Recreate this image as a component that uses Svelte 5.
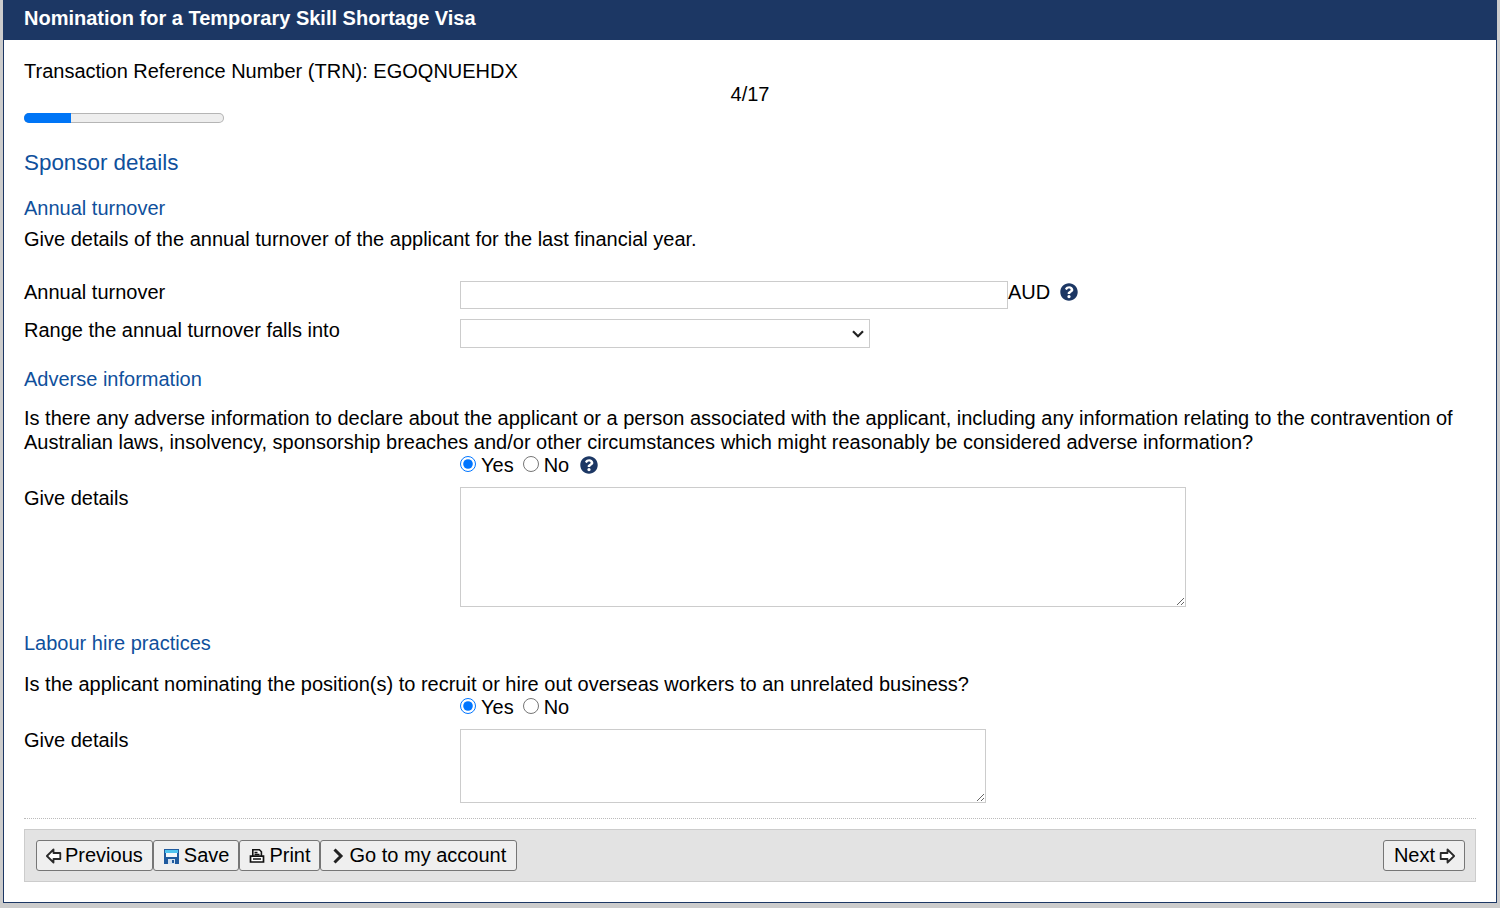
<script>
  const pct = 23.5;
</script>

{#snippet help()}
  <svg class="help" viewBox="0 0 512 512" width="18" height="18" aria-hidden="true">
    <path fill="#1c3764" d="M504 256c0 137-111 248-248 248S8 393 8 256 119 8 256 8s248 111 248 248zM262.700 90c-54.500 0-89.300 23-116.600 63.800-3.500 5.300-2.300 12.400 2.700 16.300l34.700 26.300c5.200 3.900 12.600 3 16.700-2.100 17.900-22.700 30.100-35.800 57.300-35.800 20.400 0 45.700 13.100 45.700 33 0 15-12.400 22.700-32.600 34-23.600 13.200-54.800 29.700-54.800 70.900V300c0 6.600 5.400 12 12 12h56c6.600 0 12-5.400 12-12v-1.300c0-28.600 83.400-29.800 83.400-107.100C379.200 133.300 318.700 90 262.700 90zM256 339c-25.400 0-46 20.600-46 46s20.600 46 46 46 46-20.600 46-46-20.600-46-46-46z"/>
  </svg>
{/snippet}

<div class="page">
  <div class="frame">
    <header class="title">Nomination for a Temporary Skill Shortage Visa</header>
    <main class="content">
      <div class="trn">Transaction Reference Number (TRN): EGOQNUEHDX</div>
      <div class="step">4/17</div>
      <div class="progress"><div class="progress-fill" style:width="{pct}%"></div></div>

      <h2 class="section">Sponsor details</h2>

      <h3 class="sub first">Annual turnover</h3>
      <p class="intro">Give details of the annual turnover of the applicant for the last financial year.</p>

      <div class="row turnover">
        <label class="lbl" for="turnover">Annual turnover</label>
        <div class="field inline">
          <input id="turnover" class="text" type="text" />
          <span>AUD</span>
          {@render help()}
        </div>
      </div>
      <div class="row range">
        <label class="lbl" for="range">Range the annual turnover falls into</label>
        <div class="field">
          <select id="range" class="select"><option></option></select>
        </div>
      </div>

      <h3 class="sub adverse">Adverse information</h3>
      <p class="question adverse-q">Is there any adverse information to declare about the applicant or a person associated with the applicant, including any information relating to the contravention of Australian laws, insolvency, sponsorship breaches and/or other circumstances which might reasonably be considered adverse information?</p>
      <div class="radios">
        <label><input type="radio" name="adverse" checked />Yes</label>
        <label><input type="radio" name="adverse" />No</label>
        {@render help()}
      </div>
      <div class="row details">
        <label class="lbl" for="adverse-details">Give details</label>
        <div class="field"><textarea id="adverse-details" class="area big"></textarea></div>
      </div>

      <h3 class="sub labour">Labour hire practices</h3>
      <p class="question labour-q">Is the applicant nominating the position(s) to recruit or hire out overseas workers to an unrelated business?</p>
      <div class="radios">
        <label><input type="radio" name="labour" checked />Yes</label>
        <label><input type="radio" name="labour" />No</label>
      </div>
      <div class="row details">
        <label class="lbl" for="labour-details">Give details</label>
        <div class="field"><textarea id="labour-details" class="area small"></textarea></div>
      </div>

      <div class="toolbar">
        <div class="group">
          <button type="button">
            <svg class="ico" viewBox="0 0 16 16" width="16" height="16"><path d="M0.900 8 L7.500 1.500 V5 H14.300 V11 H7.500 V14.500 Z" fill="#fff" stroke="#2a2a2a" stroke-width="1.800" stroke-linejoin="round"/></svg>
            Previous
          </button>
          <button type="button" class="save">
            <svg class="ico" viewBox="0 0 16 16" width="16" height="16"><path d="M1 1h15v15H1z" fill="#1f5a9e"/><path d="M2 2h13v3H2z" fill="#4fc3ee"/><path d="M3 5h11v4H3z" fill="#f4f8fb"/><path d="M5 11h7v5H5z" fill="#d5e2ef"/><path d="M9 12h2v3H9z" fill="#1f5a9e"/></svg>
            Save
          </button>
          <button type="button" class="print">
            <svg class="ico" viewBox="0 0 16 16" width="16" height="16"><path d="M3.800 8V1.800h6.600l2 2V8" fill="#fff" stroke="#111" stroke-width="1.600"/><path d="M5.500 4.500h3M5.500 6.500h5" stroke="#111" stroke-width="1.300" fill="none"/><path d="M1.500 8.200h13v5.800h-13z" fill="#fff" stroke="#111" stroke-width="1.700"/><path d="M4 11h8" stroke="#111" stroke-width="1.500"/></svg>
            Print
          </button>
          <button type="button" class="account">
            <svg class="ico" viewBox="0 0 16 16" width="16" height="16"><path d="M4.500 1.500 L11 8 L4.500 14.500" fill="none" stroke="#222" stroke-width="3"/></svg>
            Go to my account
          </button>
        </div>
        <button type="button" class="next">
          Next
          <svg class="ico" viewBox="0 0 16 16" width="16" height="16"><path d="M15.100 8 L8.500 1.500 V5 H1.700 V11 H8.500 V14.500 Z" fill="#fff" stroke="#2a2a2a" stroke-width="1.800" stroke-linejoin="round"/></svg>
        </button>
      </div>
    </main>
  </div>
</div>

<style>
  :global(body) {
    margin: 0;
    background: #ccc;
  }

  .page {
    height: 908px;
    padding: 0 3px;
    box-sizing: border-box;
    font-family: "Liberation Sans", Arial, sans-serif;
    font-size: 20px;
    line-height: 23px;
    color: #000;
  }

  .frame {
    height: 903px;
    box-sizing: border-box;
    background: #fff;
    border: 1px solid #1c3764;
    border-top: 0;
  }

  .title {
    height: 40px;
    padding: 0 20px;
    background: #1c3764;
    color: #fff;
    font-weight: 700;
    line-height: 37px;
  }

  .content {
    padding: 20px 20px 0;
  }

  .trn {
    height: 23px;
  }

  .step {
    height: 23px;
    text-align: center;
  }

  .progress {
    width: 200px;
    height: 10px;
    margin-top: 7px;
    background: #eee;
    box-shadow: inset 0 0 0 1px #b5b5b5;
    border-radius: 5px;
    overflow: hidden;
  }

  .progress-fill {
    height: 100%;
    background: #0075f6;
  }

  .section {
    margin: 26px 0 0;
    font-size: 22.4px;
    line-height: 28px;
    font-weight: 400;
    color: #0f509c;
  }

  .sub {
    margin: 0;
    font-size: 20px;
    line-height: 23px;
    font-weight: 400;
    color: #0f509c;
  }

  .sub.first {
    margin-top: 20px;
  }

  p {
    margin: 0;
  }

  .intro {
    margin-top: 8px;
  }

  .row {
    display: grid;
    grid-template-columns: 436px 1fr;
  }

  .turnover {
    margin-top: 30px;
  }

  .range {
    margin-top: 10px;
  }

  .field.inline {
    display: flex;
    align-items: flex-start;
    height: 28px;
  }

  .inline .help {
    margin: 2px 0 0 10px;
  }

  .text {
    width: 548px;
    height: 28px;
    box-sizing: border-box;
    border: 1px solid #ccc;
    padding: 0 4px;
    background: #fff;
  }

  .select {
    display: block;
    width: 410px;
    height: 29px;
    box-sizing: border-box;
    border: 1px solid #ccc;
    border-radius: 0;
    appearance: none;
    background: #fff url("data:image/svg+xml,%3Csvg xmlns='http://www.w3.org/2000/svg' width='12' height='8'%3E%3Cpath d='M1 1.200l5 5 5-5' fill='none' stroke='%23222' stroke-width='2.200'/%3E%3C/svg%3E") no-repeat right 5px center;
    font: inherit;
  }

  .adverse {
    margin-top: 20px;
  }

  .question {
    margin: 0;
  }

  .adverse-q {
    margin-top: 16px;
    line-height: 23.5px;
  }

  .labour-q {
    margin-top: 18px;
  }

  .radios {
    display: flex;
    align-items: center;
    height: 23px;
    margin-left: 436px;
  }

  .radios label {
    display: flex;
    align-items: center;
    margin-right: 9px;
  }

  .radios input {
    width: 16px;
    height: 16px;
    margin: 0 5px 3px 0;
  }

  .radios .help {
    margin: 0 0 1px 2px;
  }

  .details {
    margin-top: 10px;
  }

  .area {
    display: block;
    box-sizing: border-box;
    border: 1px solid #ccc;
    background: #fff;
    padding: 4px;
    margin: 0;
  }

  .area.big {
    width: 726px;
    height: 120px;
  }

  .area.small {
    width: 526px;
    height: 74px;
  }

  .labour {
    margin-top: 25px;
  }

  .toolbar {
    display: flex;
    justify-content: space-between;
    align-items: center;
    height: 53px;
    box-sizing: border-box;
    margin-top: 26px;
    padding: 0 10px 0 11px;
    background: #e3e3e3;
    border: 1px solid #ccc;
    position: relative;
  }

  .toolbar::before {
    content: "";
    position: absolute;
    left: -1px;
    right: -1px;
    top: -12px;
    border-top: 1px dotted #bbb;
  }

  .group {
    display: flex;
  }

  button {
    display: flex;
    align-items: center;
    gap: 3px;
    height: 31px;
    box-sizing: border-box;
    padding: 0 9px;
    background: #efefef;
    border: 1px solid #767676;
    border-radius: 3px;
    font: inherit;
    color: #000;
  }

  .save {
    gap: 5px;
  }

  .print {
    gap: 4px;
    padding-right: 8px;
  }

  .account {
    gap: 4px;
    padding-right: 10px;
  }

  .next {
    gap: 4px;
    padding-left: 10px;
  }

  .ico {
    flex: none;
  }
</style>
